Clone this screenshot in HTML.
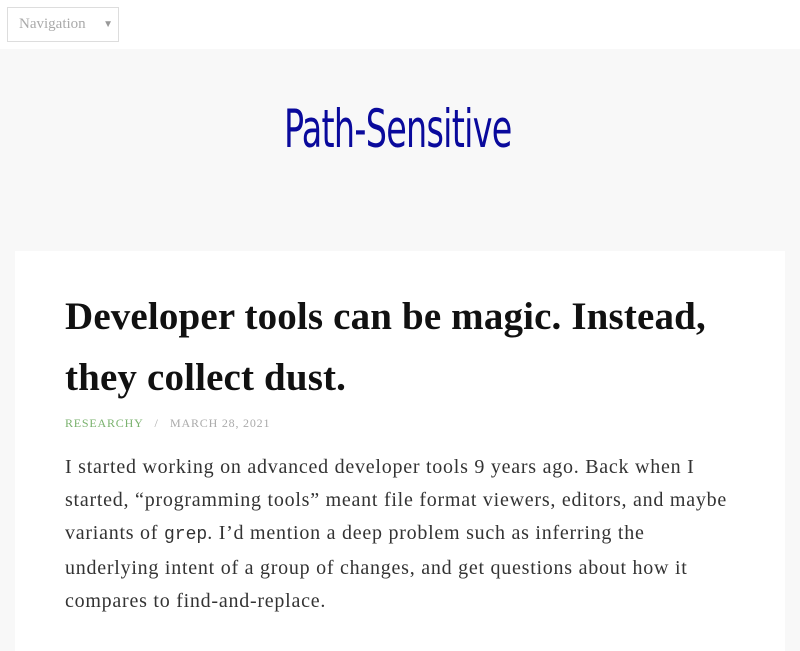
<!DOCTYPE html>
<html><head><meta charset="utf-8"><style>
body{margin:0;background:#f8f8f8;font-family:"Liberation Serif",serif;width:800px;height:600px;overflow:hidden;position:relative}
.top{position:absolute;left:0;top:0;width:800px;height:49px;background:#fff}
.nav{position:absolute;left:7px;top:7px;width:110px;height:33px;border:1px solid #ddd;background:#fff;color:#aaa;font-size:15px;line-height:33px;box-sizing:content-box}
.nav span{position:absolute;left:11px}
.nav i{position:absolute;right:5px;top:0;font-style:normal;font-size:10px;color:#999}
.logo{position:absolute;left:284px;top:99px;font-family:"DejaVu Sans Condensed","DejaVu Sans",sans-serif;font-size:53px;color:#0a0a9c;transform:scaleX(.7);transform-origin:left top;white-space:nowrap;letter-spacing:-1px}
.card{position:absolute;left:15px;top:251px;width:770px;height:400px;background:#fff}
h1{position:absolute;left:50px;top:35px;margin:0;width:700px;font-size:39px;line-height:61px;font-weight:bold;color:#111;letter-spacing:0.15px;white-space:nowrap}
.meta{position:absolute;left:50px;top:165px;font-size:12px;letter-spacing:0.8px;color:#aaa}
.meta b{color:#7ab26e;font-weight:normal}
p{position:absolute;left:50px;top:200px;margin:0;width:720px;font-size:20px;line-height:33px;color:#333;letter-spacing:0.75px;white-space:nowrap}
code{font-family:"Liberation Mono",monospace;font-size:18px;letter-spacing:0}
</style></head><body>
<div class="top"><div class="nav"><span>Navigation</span><i>▼</i></div></div>
<div class="logo">Path-Sensitive</div>
<div class="card">
<h1>Developer tools can be magic. Instead,<br>they collect dust.</h1>
<div class="meta"><b>RESEARCHY</b> &nbsp;&nbsp;/&nbsp;&nbsp; MARCH 28, 2021</div>
<p>I started working on advanced developer tools 9 years ago. Back when I<br>started, “programming tools” meant file format viewers, editors, and maybe<br>variants of <code>grep</code>. I’d mention a deep problem such as inferring the<br>underlying intent of a group of changes, and get questions about how it<br>compares to find-and-replace.</p>
</div>
</body></html>
